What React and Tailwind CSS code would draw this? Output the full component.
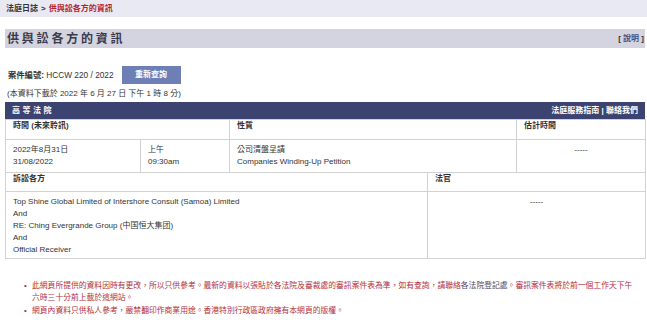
export default function App() {
  const font = { fontFamily: '"Liberation Sans", "Noto Sans CJK TC", sans-serif' };
  const cell = "border border-[#d2d2d2] align-top px-[7px]";
  return (
    <div className="w-[647px] h-[325px] bg-white text-[#333] overflow-hidden" style={font}>
      <div className="h-[17px] bg-[#e9e9f3] flex items-center px-[6px] text-[8px] font-bold leading-none">
        <span className="text-[#333]">法庭日誌</span>
        <span className="mx-[3px] text-[#333]">&gt;</span>
        <span className="text-[#b3232d]">供與訟各方的資訊</span>
      </div>

      <div className="pl-[5px] pr-[2px]">
        <div className="mt-[12px] h-[19px] bg-[#d4d4e0] flex items-center justify-between pl-[2px] pr-[1px]">
          <span className="text-[12px] font-bold tracking-[2.8px] text-[#3a3a4a] leading-none">供與訟各方的資訊</span>
          <span className="text-[8px] font-bold leading-none text-[#333]">
            [ <span className="text-[#44507f]">說明</span> ]
          </span>
        </div>

        <div className="mt-[18px] h-[18px] flex items-center pl-[3px]">
          <span className="text-[8.3px] leading-none">
            <span className="font-bold">案件編號:</span> HCCW 220 / 2022
          </span>
          <div className="ml-[8px] w-[59px] h-[18px] bg-[#6d7fb4] flex items-center justify-center text-white text-[8px] font-bold leading-none">
            重新查詢
          </div>
        </div>

        <div className="mt-[4px] h-[12px] flex items-center pl-[2px] text-[8px] leading-none">
          (本資料下載於 2022 年 6 月 27 日 下午 1 時 8 分)
        </div>

        <div className="mt-[2px] h-[17px] bg-[#3d4370] flex items-center justify-between px-[7px] text-white text-[8px] font-bold leading-none">
          <span className="tracking-[2.5px]">高等法院</span>
          <span>法庭服務指南 | 聯絡我們</span>
        </div>

        <table className="w-[640px] border-collapse table-fixed text-[8px] leading-[12px]">
          <colgroup>
            <col className="w-[135px]" />
            <col className="w-[89px]" />
            <col className="w-[287px]" />
            <col className="w-[129px]" />
          </colgroup>
          <tbody>
            <tr className="h-[20px]">
              <td colSpan={2} className={cell + " align-middle font-bold"}>時間 (未來聆訊)</td>
              <td className={cell + " align-middle font-bold"}>性質</td>
              <td className={cell + " align-middle font-bold"}>估計時間</td>
            </tr>
            <tr className="h-[33px]">
              <td className={cell + " pt-[4px]"}>2022年8月31日<br />31/08/2022</td>
              <td className={cell + " pt-[4px]"}>上午<br />09:30am</td>
              <td className={cell + " pt-[4px]"}>公司清盤呈請<br />Companies Winding-Up Petition</td>
              <td className={cell + " pt-[4px] text-center"}>-----</td>
            </tr>
          </tbody>
        </table>
        <table className="w-[640px] border-collapse table-fixed text-[8px] leading-[12px]">
          <colgroup>
            <col className="w-[422px]" />
            <col className="w-[218px]" />
          </colgroup>
          <tbody>
            <tr className="h-[18px]">
              <td className={cell + " align-middle font-bold border-t-0"}>訴訟各方</td>
              <td className={cell + " align-middle font-bold border-t-0"}>法官</td>
            </tr>
            <tr className="h-[67px]">
              <td className={cell + " pt-[4px]"}>
                Top Shine Global Limited of Intershore Consult (Samoa) Limited<br />
                And<br />
                RE: Ching Evergrande Group (中国恒大集团)<br />
                And<br />
                Official Receiver
              </td>
              <td className={cell + " pt-[4px] text-center"}>-----</td>
            </tr>
          </tbody>
        </table>

        <div className="mt-[21px] flex flex-col gap-[1px] text-[7.8px] leading-[12px] text-[#b3303c]">
          <div className="flex">
            <span className="w-[27px] pl-[19px] text-[#8a3a44]">•</span>
            <span className="w-[606px]">
              此網頁所提供的資料因時有更改，所以只供參考。最新的資料以張貼於各法院及審裁處的審訊案件表為準，如有查詢，請聯絡<span className="text-[#4a4a6c]">各法院登記處</span>。審訊案件表將於前一個工作天下午六時三十分前上載於這網站。
            </span>
          </div>
          <div className="flex">
            <span className="w-[27px] pl-[19px] text-[#8a3a44]">•</span>
            <span className="w-[606px]">網頁內資料只供私人參考，嚴禁翻印作商業用途。香港特別行政區政府擁有本網頁的版權。</span>
          </div>
        </div>
      </div>
    </div>
  );
}
